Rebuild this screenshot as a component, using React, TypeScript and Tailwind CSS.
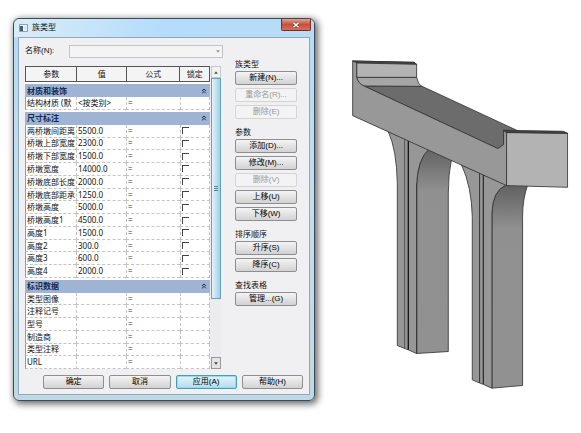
import { ChevronsUp } from 'lucide-react'

type Param = { name: string; value?: string; lock?: boolean }

const groups: { title: string; height: string; rows: Param[] }[] = [
  {
    title: '材质和装饰',
    height: 'h-[26px]',
    rows: [{ name: '结构材质 (默', value: '<按类别>' }],
  },
  {
    title: '尺寸标注',
    height: 'h-[166px]',
    rows: [
      { name: '两桥墩间距离', value: '5500.0', lock: true },
      { name: '桥墩上部宽度', value: '2300.0', lock: true },
      { name: '桥墩下部宽度', value: '1500.0', lock: true },
      { name: '桥墩宽度', value: '14000.0', lock: true },
      { name: '桥墩底部长度', value: '2000.0', lock: true },
      { name: '桥墩底部距承', value: '1250.0', lock: true },
      { name: '桥墩高度', value: '5000.0', lock: true },
      { name: '桥墩高度1', value: '4500.0', lock: true },
      { name: '高度1', value: '1500.0', lock: true },
      { name: '高度2', value: '300.0', lock: true },
      { name: '高度3', value: '600.0', lock: true },
      { name: '高度4', value: '2000.0', lock: true },
    ],
  },
  {
    title: '标识数据',
    height: 'h-[89px]',
    rows: [
      { name: '类型图像' },
      { name: '注释记号' },
      { name: '型号' },
      { name: '制造商' },
      { name: '类型注释' },
      { name: 'URL' },
    ],
  },
]

const actions = [
  {
    title: '族类型',
    buttons: [
      { label: '新建(N)...' },
      { label: '重命名(R)...', disabled: true },
      { label: '删除(E)', disabled: true },
    ],
  },
  {
    title: '参数',
    buttons: [
      { label: '添加(D)...' },
      { label: '修改(M)...' },
      { label: '删除(V)', disabled: true },
      { label: '上移(U)' },
      { label: '下移(W)' },
    ],
  },
  { title: '排序顺序', buttons: [{ label: '升序(S)' }, { label: '降序(C)' }] },
  { title: '查找表格', buttons: [{ label: '管理...(G)' }] },
]

const rowGrid = 'grid grid-cols-[51fr_50fr_54fr_30fr]'

function Button({ label, disabled, primary }: { label: string; disabled?: boolean; primary?: boolean }) {
  const look = disabled
    ? 'border-[#d4d4d4] bg-[#f3f3f3] text-[#9a9a9a]'
    : primary
      ? 'border-[#4a9cb8] bg-linear-to-b from-[#e6f5fb] to-[#b5dcec] text-black shadow-[inset_0_0_1px_1px_#8fdcf0]'
      : 'border-[#8e8e8e] bg-linear-to-b from-[#f4f4f4] to-[#d2d2d2] text-black'
  return (
    <button
      type="button"
      disabled={disabled}
      className={`flex h-[14px] w-full items-center justify-center rounded-xs border whitespace-nowrap ${look}`}
    >
      {label}
    </button>
  )
}

function ParamTable() {
  return (
    <table className="flex min-w-0 flex-1 flex-col gap-[2px] bg-white [font-family:'Noto_Sans','Noto_Sans_CJK_SC',sans-serif]">
      <thead className="block">
        <tr className={`${rowGrid} h-4 border border-[#555] bg-[#f4f4f4]`}>
          {['参数', '值', '公式', '锁定'].map((h) => (
            <th key={h} className="flex items-center justify-center border-l border-[#555] font-normal first:border-l-0">
              {h}
            </th>
          ))}
        </tr>
      </thead>
      {groups.map((g) => (
        <tbody key={g.title} className={`grid auto-rows-fr ${g.height}`}>
          <tr className="flex bg-[#9fb4d3]">
            <th colSpan={4} className="flex flex-1 items-center justify-between pr-[2px] pl-[2px] text-left font-bold text-[#14284b]">
              {g.title}
              <ChevronsUp size={8} strokeWidth={3} />
            </th>
          </tr>
          {g.rows.map((r) => (
            <tr key={r.name} className={`${rowGrid} min-h-0`}>
              <td className="flex min-h-0 items-center border-b border-l border-dashed border-[#c4c4c4] border-l-[#999] pl-px whitespace-nowrap [border-left-style:solid]">
                {r.name}
              </td>
              <td className="flex min-h-0 items-center border-b border-l border-dashed border-[#c4c4c4] pl-px whitespace-nowrap">
                {r.value}
              </td>
              <td className="flex min-h-0 items-center border-b border-l border-dashed border-[#c4c4c4] pl-px text-[#333]">=</td>
              <td className="flex min-h-0 items-center border-x border-b border-dashed border-[#c4c4c4] pl-px">
                {r.lock && (
                  <input
                    type="checkbox"
                    aria-label={`锁定 ${r.name}`}
                    className="size-[7px] appearance-none border-t border-l border-[#444] bg-white"
                  />
                )}
              </td>
            </tr>
          ))}
        </tbody>
      ))}
    </table>
  )
}

function ScrollBar() {
  return (
    <div className="flex w-[10px] flex-col bg-[#ececee]">
      <div className="flex h-3 items-center justify-center border border-[#c8c8c8] bg-[#f2f2f2]">
        <svg viewBox="0 0 6 4" className="h-[3px] w-1">
          <path d="M0 4 3 0l3 4z" fill="#555" />
        </svg>
      </div>
      <div className="flex h-[221px] flex-col items-center justify-center gap-px border border-[#5fa3bd] bg-linear-to-r from-[#e3f4fb] to-[#a3cfe2]">
        <i className="h-px w-1 bg-[#5b8596]" />
        <i className="h-px w-1 bg-[#5b8596]" />
        <i className="h-px w-1 bg-[#5b8596]" />
      </div>
      <div className="flex-1" />
      <div className="flex h-3 items-center justify-center border border-[#999] bg-[#e4e4e4]">
        <svg viewBox="0 0 6 4" className="h-[3px] w-1">
          <path d="M0 0h6L3 4z" fill="#444" />
        </svg>
      </div>
    </div>
  )
}

function TypeDialog() {
  return (
    <section className="w-[52vw] shrink-0 rounded-md border border-[#3b4a55] bg-linear-to-b from-[#b3dbf8] via-[#c2dfee] to-[#bfd9e4] px-1 pb-[5px] text-[8px] leading-3 text-[#111] shadow-[2px_2px_7px_1px_rgba(0,0,0,0.6)] [font-family:'Liberation_Sans','Noto_Sans_CJK_SC',sans-serif]">
      <header className="-mx-1 flex h-[18px] items-start rounded-t-md bg-linear-to-r from-[#d9ecf8] via-[#b4dcfb] to-[#b9dcf5] pl-[5px]">
        <div className="flex h-full flex-1 items-center gap-1">
          <svg viewBox="0 0 9 8" className="h-2 w-[9px]">
            <path d="M.5.5h8v7h-8z" fill="#f5f8fa" stroke="#8aa0b0" />
            <path d="M1 2h3v5H1z" fill="#3c5f7a" />
            <path d="M5.500 3h2M5.500 5h2" stroke="#b9c6cf" />
          </svg>
          <h1>族类型</h1>
        </div>
        <button
          type="button"
          aria-label="关闭"
          className="mr-[3px] flex h-3 w-[30px] items-center justify-center rounded-b-xs border border-t-0 border-[#7c2a22] bg-linear-to-b from-[#e0a094] via-[#c5503e] to-[#d2705a]"
        >
          <svg viewBox="0 0 8 6" className="h-[6px] w-2">
            <path d="m1.500.8 5 4.400m0-4.400-5 4.400" stroke="#7a4038" strokeWidth="2.600" />
            <path d="m1.500.8 5 4.400m0-4.400-5 4.400" stroke="#fff" strokeWidth="1.500" />
          </svg>
        </button>
      </header>

      <div className="border border-[#8fa9b8] bg-[#f0f0f2] pb-[5px]">
        <div className="flex gap-3 pt-[7px] pr-3 pl-[6px]">
          <div className="min-w-0 flex-1">
            <div className="flex h-3 items-center">
              <label htmlFor="type-name" className="w-11">
                名称(N):
              </label>
              <div className="relative flex-1">
                <select
                  id="type-name"
                  disabled
                  className="block h-[13px] w-full appearance-none border border-[#c4c4c4] bg-[#f4f4f4]"
                />
                <svg viewBox="0 0 6 4" className="pointer-events-none absolute top-[5px] right-[3px] h-[3px] w-1">
                  <path d="M0 0h6L3 4z" fill="#999" />
                </svg>
              </div>
            </div>
            <div className="mt-[9px] flex gap-px pr-[2px]">
              <ParamTable />
              <ScrollBar />
            </div>
          </div>

          <div className="flex w-[62px] flex-col gap-2 pt-[14px]">
            {actions.map((a) => (
              <div key={a.title} role="group" aria-label={a.title}>
                <h2>{a.title}</h2>
                <div className="flex flex-col gap-[3px]">
                  {a.buttons.map((b) => (
                    <Button key={b.label} {...b} />
                  ))}
                </div>
              </div>
            ))}
          </div>
        </div>

        <footer className="mt-[6px] grid grid-cols-4 gap-[5px] pr-[6px] pl-6">
          <Button label="确定" />
          <Button label="取消" />
          <Button label="应用(A)" primary />
          <Button label="帮助(H)" />
        </footer>
      </div>
    </section>
  )
}

function PierModel() {
  return (
    <svg viewBox="0 0 723 1050" className="mt-8 min-w-0 flex-1" stroke="#333" strokeWidth="2.500" strokeLinejoin="round">
      <defs>
        <linearGradient id="arch" x1="0" y1="0" x2="0" y2="1">
          <stop offset="0" stopColor="#606060" />
          <stop offset="0.080" stopColor="#707070" />
          <stop offset="0.220" stopColor="#909090" />
          <stop offset="1" stopColor="#919191" />
        </linearGradient>
      </defs>

      {/* far pier */}
      <path d="M250 285 335 325Q325 375 325 430V905L230 911V400Q234 335 262 295Z" fill="url(#arch)" />
      <path d="M145 245 270 295Q232 325 230 405V911L205 900 195 896 172 887V400Q170 300 145 245Z" fill="#979797" />
      <path d="M194 265V896M230 400V911" fill="none" strokeWidth="2" />
      <path d="M205 270V900" fill="none" stroke="#111" strokeWidth="4" />

      {/* near pier */}
      <path d="M480 400H565Q548 445 548 500V1007L456 1015V490Q458 425 490 405Z" fill="url(#arch)" />
      <path d="M365 345 500 405Q458 420 456 490V1015L431 1004 418 999 397 990V500Q395 410 365 345Z" fill="#979797" />
      <path d="M419 370V999" fill="none" strokeWidth="3" />
      <path d="M430 375V1003" fill="none" stroke="#111" strokeWidth="3" />

      {/* cap beam */}
      <path d="M72 108H244L535 243H491V284L474 296Z" fill="#6c6c6c" />
      <path d="M50 82H230Q234 102 244 109L72 108Q54 100 50 82Z" fill="#a6a6a6" />
      <path d="M38 33 222 37 230 43V82H50V38Z" fill="#b3b3b3" />
      <path d="M38 33 222 37 230 43 50 39Z" fill="#444" />
      <path d="M38 33 50 38V82Q54 100 72 108L474 296 491 284V241L500 247V407L38 197Z" fill="#989898" />
      <path d="M500 247 683 250V412L500 407Z" fill="#b3b3b3" />
      <path d="M491 241 670 244 683 250 500 248Z" fill="#444" />
    </svg>
  )
}

export default function App() {
  return (
    <main className="flex min-h-screen items-start bg-white pt-[18px] pl-[13px]">
      <TypeDialog />
      <div className="flex min-w-0 flex-1 pl-[25px]">
        <PierModel />
      </div>
    </main>
  )
}
